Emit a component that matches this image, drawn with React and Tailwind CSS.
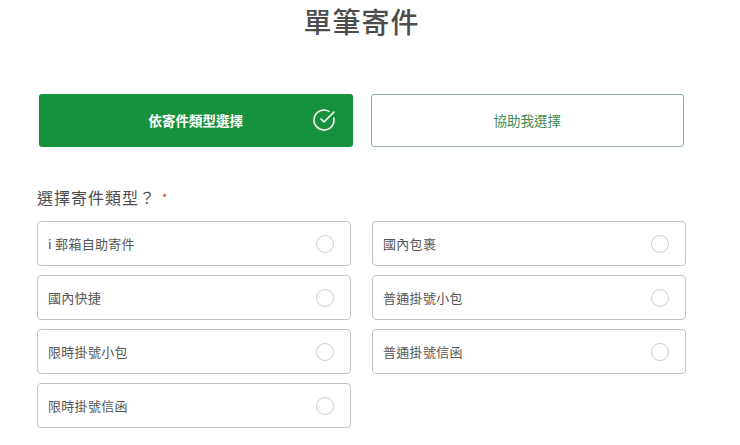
import React, { useState } from "react";

const font = { fontFamily: '"Noto Sans CJK TC", "Noto Sans", sans-serif' };

const types = [
  "i 郵箱自助寄件",
  "國內包裹",
  "國內快捷",
  "普通掛號小包",
  "限時掛號小包",
  "普通掛號信函",
  "限時掛號信函",
];

const CheckIcon = () => (
  <svg width="24" height="24" viewBox="0 0 24 24" fill="none" stroke="currentColor" strokeWidth="1.6" strokeLinecap="round" strokeLinejoin="round">
    <path d="M21.801 10A10 10 0 1 1 17 3.335" />
    <path d="m9 11 3 3L22 4" />
  </svg>
);

export default function App() {
  const [mode, setMode] = useState("type");
  const [selected, setSelected] = useState(null);

  return (
    <div className="w-[740px] h-[445px] bg-white overflow-hidden" style={font}>
      <div className="w-[649px] ml-[37px]">
        <h1 className="text-center text-[28px] leading-[40px] pt-[1px] font-medium text-[#4d4d4d] tracking-[1px]">
          單筆寄件
        </h1>

        <div className="mt-[53px] px-[2px] grid grid-cols-2 gap-[18px]">
          <button
            type="button"
            onClick={() => setMode("type")}
            className={
              mode === "type"
                ? "relative h-[53px] rounded-[3px] bg-[#17923c] text-white text-[13.5px] font-bold flex items-center justify-center"
                : "relative h-[53px] rounded-[3px] border border-[#93ad9f] bg-white text-[#3f8a55] text-[13.5px] flex items-center justify-center"
            }
          >
            依寄件類型選擇
            {mode === "type" && (
              <span className="absolute right-[17px] top-[14px] text-white">
                <CheckIcon />
              </span>
            )}
          </button>
          <button
            type="button"
            onClick={() => setMode("help")}
            className={
              mode === "help"
                ? "relative h-[53px] rounded-[3px] bg-[#17923c] text-white text-[13.5px] font-bold flex items-center justify-center"
                : "relative h-[53px] rounded-[3px] border border-[#93ad9f] bg-white text-[#3f8a55] text-[13.5px] flex items-center justify-center"
            }
          >
            協助我選擇
            {mode === "help" && (
              <span className="absolute right-[17px] top-[14px] text-white">
                <CheckIcon />
              </span>
            )}
          </button>
        </div>

        <div className="mt-[38px] flex items-center text-[16px] leading-[24px] text-[#4d4d4d] tracking-[1px]">
          選擇寄件類型？
          <span className="ml-[6px] text-[11px] text-[#c0392b]">*</span>
        </div>

        <div className="mt-[12px] grid grid-cols-2 gap-x-[21px] gap-y-[9px]">
          {types.map((t) => (
            <button
              key={t}
              type="button"
              onClick={() => setSelected(t)}
              className="h-[45px] rounded-[4px] border border-[#c4c4c4] bg-white flex items-center justify-between pl-[10px] pr-[16px] text-left"
            >
              <span className="text-[13px] text-[#555] tracking-[0.3px]">{t}</span>
              <span
                className={
                  selected === t
                    ? "w-[18px] h-[18px] rounded-full border-[5px] border-[#17923c]"
                    : "w-[18px] h-[18px] rounded-full border border-[#cfcfcf]"
                }
              />
            </button>
          ))}
        </div>
      </div>
    </div>
  );
}
